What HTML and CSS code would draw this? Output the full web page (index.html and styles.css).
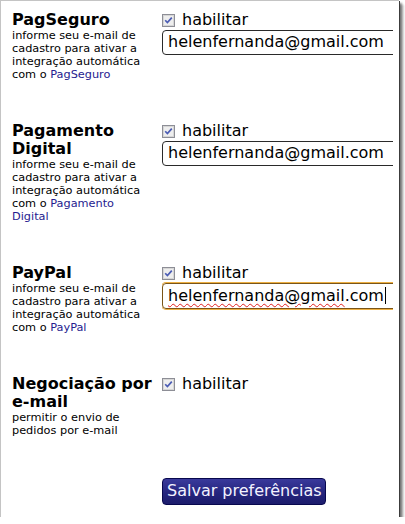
FILE: index.html
```html
<!DOCTYPE html>
<html lang="pt-BR">
<head>
<meta charset="utf-8">
<title>Preferências de pagamento</title>
<link rel="stylesheet" href="styles.css">
</head>
<body>
<div class="frame">
  <div class="row">
    <div class="label">
      <div class="title">PagSeguro</div>
      <div class="desc">informe seu e-mail de cadastro para ativar a integração automática com o <a href="#">PagSeguro</a></div>
    </div>
    <div class="control">
      <label class="check"><span class="box"><svg width="13" height="13" viewBox="0 0 13 13"><rect x="0.5" y="0.5" width="12" height="12" fill="#e4e4e4" stroke="#8d8e96"/><rect x="1.5" y="1.5" width="10" height="10" fill="#eeeeee" stroke="#d6d6d6"/><path d="M3.2 6.2 L5.4 8.6 L9.8 3.6" fill="none" stroke="#4b5cb4" stroke-width="1.7"/></svg></span>habilitar</label>
      <div class="field">helenfernanda@gmail.com</div>
    </div>
  </div>
  <div class="row">
    <div class="label">
      <div class="title">Pagamento Digital</div>
      <div class="desc">informe seu e-mail de cadastro para ativar a integração automática com o <a href="#">Pagamento Digital</a></div>
    </div>
    <div class="control">
      <label class="check"><span class="box"><svg width="13" height="13" viewBox="0 0 13 13"><rect x="0.5" y="0.5" width="12" height="12" fill="#e4e4e4" stroke="#8d8e96"/><rect x="1.5" y="1.5" width="10" height="10" fill="#eeeeee" stroke="#d6d6d6"/><path d="M3.2 6.2 L5.4 8.6 L9.8 3.6" fill="none" stroke="#4b5cb4" stroke-width="1.7"/></svg></span>habilitar</label>
      <div class="field">helenfernanda@gmail.com</div>
    </div>
  </div>
  <div class="row">
    <div class="label">
      <div class="title">PayPal</div>
      <div class="desc">informe seu e-mail de cadastro para ativar a integração automática com o <a href="#">PayPal</a></div>
    </div>
    <div class="control">
      <label class="check"><span class="box"><svg width="13" height="13" viewBox="0 0 13 13"><rect x="0.5" y="0.5" width="12" height="12" fill="#e4e4e4" stroke="#8d8e96"/><rect x="1.5" y="1.5" width="10" height="10" fill="#eeeeee" stroke="#d6d6d6"/><path d="M3.2 6.2 L5.4 8.6 L9.8 3.6" fill="none" stroke="#4b5cb4" stroke-width="1.7"/></svg></span>habilitar</label>
      <div class="field focused"><span class="spell">helenfernanda@gmail</span>.com<span class="caret"></span></div>
    </div>
  </div>
  <div class="row">
    <div class="label">
      <div class="title">Negociação por e-mail</div>
      <div class="desc">permitir o envio de pedidos por e-mail</div>
    </div>
    <div class="control">
      <label class="check"><span class="box"><svg width="13" height="13" viewBox="0 0 13 13"><rect x="0.5" y="0.5" width="12" height="12" fill="#e4e4e4" stroke="#8d8e96"/><rect x="1.5" y="1.5" width="10" height="10" fill="#eeeeee" stroke="#d6d6d6"/><path d="M3.2 6.2 L5.4 8.6 L9.8 3.6" fill="none" stroke="#4b5cb4" stroke-width="1.7"/></svg></span>habilitar</label>
    </div>
  </div>
  <div class="row actions">
    <div></div>
    <div class="control">
      <button class="btn" type="button">Salvar preferências</button>
    </div>
  </div>
</div>
</body>
</html>
```
FILE: styles.css
```css
html, body {
  margin: 0;
  padding: 0;
  background: #fff;
}
body {
  font-family: "DejaVu Sans", Verdana, sans-serif;
  color: #000;
}
.frame {
  box-sizing: border-box;
  width: 399px;
  height: 517px;
  border-left: 1px solid #c4c4c4;
  border-top: 1px solid #c4c4c4;
  padding: 10px 6px 0 11px;
  background: #fff;
  box-shadow: 1px 1px 0 #3c3c3c, 3px 3px 2px rgba(0,0,0,0.45), 5px 5px 2px rgba(0,0,0,0.18);
}
.row {
  display: grid;
  grid-template-columns: 140px 1fr;
  column-gap: 10px;
  padding-bottom: 41px;
}
.actions {
  padding-bottom: 0;
}
.title {
  font-weight: bold;
  font-size: 16px;
  line-height: 18px;
}
.desc {
  font-size: 11.3px;
  line-height: 13px;
}
.desc a {
  color: #261b8f;
  text-decoration: none;
}
.control {
  overflow: hidden;
  min-width: 0;
}
.check {
  display: flex;
  align-items: center;
  gap: 7px;
  font-size: 16px;
  line-height: 18px;
  height: 18px;
}
.box, .box svg {
  display: block;
}
.field {
  box-sizing: border-box;
  width: 240px;
  height: 25px;
  margin-top: 1px;
  border: 1px solid #2a2a2a;
  border-radius: 4px;
  padding: 1px 5px 3px;
  font-size: 16px;
  line-height: 19px;
  white-space: nowrap;
  color: #000;
}
.focused {
  height: 26px;
  border-color: #7a5518;
  box-shadow: 0 0 0 1px #eeb043;
  padding-top: 2px;
}
.spell {
  text-decoration: underline wavy #e02020;
  text-decoration-thickness: 1px;
  text-underline-offset: 2px;
}
.caret {
  display: inline-block;
  width: 1px;
  height: 17px;
  background: #000;
  vertical-align: -3px;
  margin-left: 1px;
}
.btn {
  box-sizing: border-box;
  height: 27px;
  margin: 0;
  padding: 0 3px 1px 4px;
  font-family: "DejaVu Sans", Verdana, sans-serif;
  font-size: 16px;
  line-height: 24px;
  color: #f2f2ff;
  background: linear-gradient(#3a3a9c, #25257e 55%, #1c1c6c);
  border: 1px solid #08084e;
  border-radius: 4px;
}
```
